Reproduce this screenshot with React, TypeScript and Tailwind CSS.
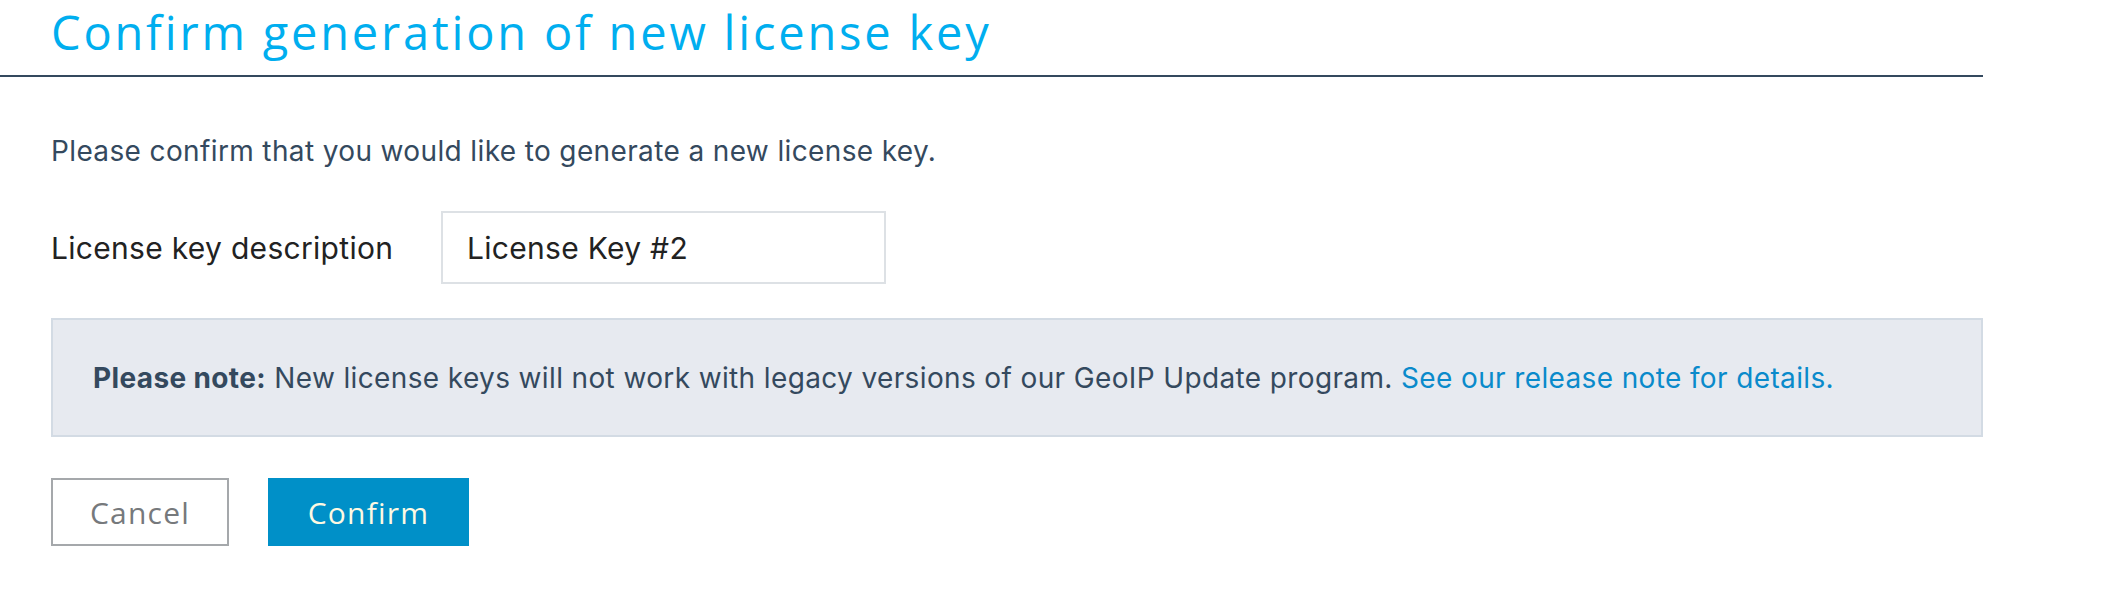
import React from "react";

export default function App() {
  return (
    <div className="w-[2128px] h-[604px] bg-white overflow-hidden">
      <div className="w-[1983px]">
        <h1 className="h-[77px] border-b-2 border-[#34495e] pl-[51px] pt-[2px] text-[47px] leading-[60px] tracking-[2.8px] font-normal text-[#00aeef] font-['Open_Sans',sans-serif]">
          Confirm generation of new license key
        </h1>
        <div className="pl-[51px] font-['Inter',sans-serif]">
          <p className="mt-[54px] text-[28px] leading-[40px] tracking-[0.37px] text-[#34495e]">
            Please confirm that you would like to generate a new license key.
          </p>
          <div className="mt-[40px] flex items-center">
            <label className="w-[390px] text-[30px] leading-[40px] tracking-[0.3px] text-[#222]">
              License key description
            </label>
            <input
              type="text"
              defaultValue="License Key #2"
              className="h-[73px] w-[445px] border-2 border-[#dde1e5] pl-[24px] text-[30px] tracking-[0.3px] text-[#222] outline-none font-['Inter',sans-serif]"
            />
          </div>
          <div className="mt-[34px] h-[119px] flex items-center border-2 border-[#d3dbe4] bg-[#e7eaf0] pl-[40px] text-[28px] leading-[40px] tracking-[0.37px] text-[#34495e]">
            <p>
              <strong className="font-bold">Please note:</strong> New license keys will not work with legacy versions of our GeoIP Update program.{" "}
              <a href="#" className="text-[#0a8acb]">See our release note for details.</a>
            </p>
          </div>
          <div className="mt-[41px] flex gap-[39px] font-['Open_Sans',sans-serif]">
            <button className="h-[68px] w-[178px] border-2 border-[#a5a8ab] bg-white text-[30px] tracking-[1.2px] text-[#76797c]">
              Cancel
            </button>
            <button className="h-[68px] w-[201px] bg-[#0090c8] text-[30px] tracking-[1.2px] text-[#fdf9e3]">
              Confirm
            </button>
          </div>
        </div>
      </div>
    </div>
  );
}
